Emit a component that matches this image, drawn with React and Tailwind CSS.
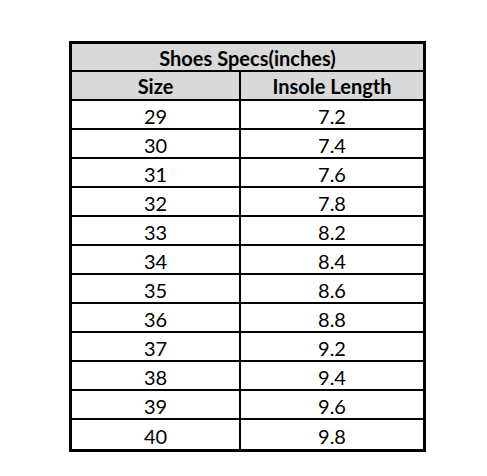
import React from "react";

const rows = [
  ["29", "7.2"],
  ["30", "7.4"],
  ["31", "7.6"],
  ["32", "7.8"],
  ["33", "8.2"],
  ["34", "8.4"],
  ["35", "8.6"],
  ["36", "8.8"],
  ["37", "9.2"],
  ["38", "9.4"],
  ["39", "9.6"],
  ["40", "9.8"],
];

const App = () => {
  return (
    <div className="w-[487px] h-[476px] bg-white pt-[41px] pl-[69px] font-['Lato','Liberation_Sans',sans-serif] text-[20px] leading-none text-black">
      <div className="w-[357px] border-[3px] border-black">
        <div className="h-[28px] border-b-2 border-black bg-[#d9d9d9] flex items-center justify-center pt-px font-bold">
          Shoes Specs(inches)
        </div>
        <div className="h-[29px] border-b-2 border-black bg-[#d9d9d9] grid grid-cols-[167px_2px_182px] font-bold">
          <div className="flex items-center justify-center pt-px">Size</div>
          <div className="bg-black" />
          <div className="flex items-center justify-center pt-px">Insole Length</div>
        </div>
        {rows.map(([size, len], i) => (
          <div
            key={size}
            className={
              "h-[29px] grid grid-cols-[167px_2px_182px] " +
              (i < rows.length - 1 ? "border-b-2 border-black" : "")
            }
          >
            <div className="flex items-center justify-center pt-[2px]">{size}</div>
            <div className="bg-black" />
            <div className="flex items-center justify-center pt-[2px]">{len}</div>
          </div>
        ))}
      </div>
    </div>
  );
};

export default App;
